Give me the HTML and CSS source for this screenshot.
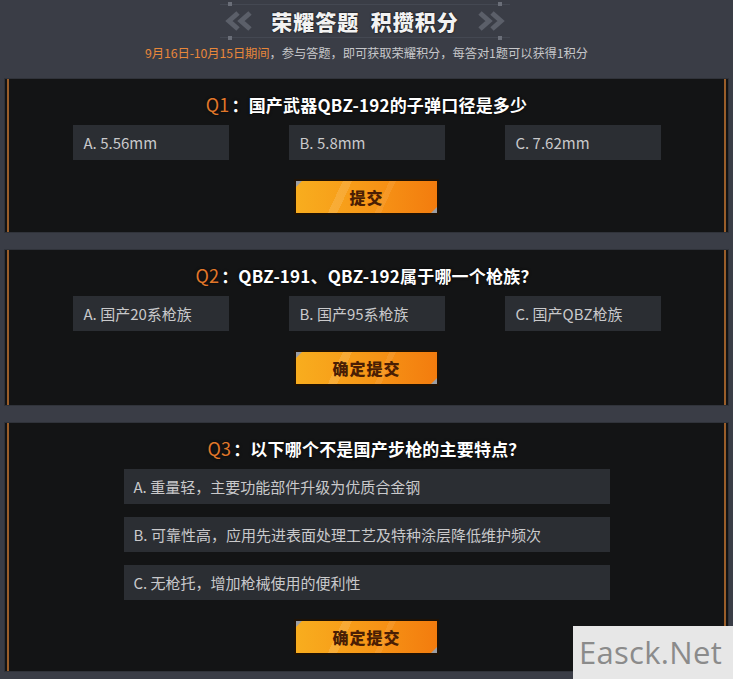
FILE: index.html
```html
<!DOCTYPE html>
<html lang="zh">
<head>
<meta charset="utf-8">
<link rel="stylesheet" href="styles.css">
</head>
<body>
<div class="page">
  <header class="head">
    <div class="banner">
      <svg class="chev" width="36" height="20" viewBox="0 0 36 20"><path d="M14 2 L5 10 L14 18 M26 2 L17 10 L26 18" fill="none" stroke="#5b5f69" stroke-width="5"/></svg>
      <h1 class="title">荣耀答题&nbsp;&nbsp;积攒积分</h1>
      <svg class="chev" width="36" height="20" viewBox="0 0 36 20"><path d="M10 2 L19 10 L10 18 M22 2 L31 10 L22 18" fill="none" stroke="#5b5f69" stroke-width="5"/></svg>
      <span class="dot dot-tl"></span><span class="dot dot-tr"></span><span class="dot dot-bl"></span><span class="dot dot-br"></span>
    </div>
    <p class="sub"><span class="hl">9月16日-10月15日期间</span>，参与答题，即可获取荣耀积分，每答对1题可以获得1积分</p>
  </header>

  <section class="panel">
    <h2 class="q"><span class="qn">Q1</span>：国产武器QBZ-192的子弹口径是多少</h2>
    <div class="opts row">
      <div class="opt">A. 5.56mm</div>
      <div class="opt">B. 5.8mm</div>
      <div class="opt">C. 7.62mm</div>
    </div>
    <button class="btn">提交</button>
  </section>

  <section class="panel">
    <h2 class="q"><span class="qn">Q2</span>：QBZ-191、QBZ-192属于哪一个枪族？</h2>
    <div class="opts row">
      <div class="opt">A. 国产20系枪族</div>
      <div class="opt">B. 国产95系枪族</div>
      <div class="opt">C. 国产QBZ枪族</div>
    </div>
    <button class="btn">确定提交</button>
  </section>

  <section class="panel">
    <h2 class="q"><span class="qn">Q3</span>：以下哪个不是国产步枪的主要特点？</h2>
    <div class="opts col">
      <div class="opt wide">A. 重量轻，主要功能部件升级为优质合金钢</div>
      <div class="opt wide">B. 可靠性高，应用先进表面处理工艺及特种涂层降低维护频次</div>
      <div class="opt wide">C. 无枪托，增加枪械使用的便利性</div>
    </div>
    <button class="btn">确定提交</button>
  </section>
</div>
<div class="wm">Easck.Net</div>
</body>
</html>
```

FILE: styles.css
```css
* { box-sizing: border-box; }
html, body { margin: 0; padding: 0; }
body {
  background: #3a3d46;
  font-family: "Noto Sans CJK SC", "Noto Sans", sans-serif;
  width: 733px;
  height: 679px;
  overflow: hidden;
  position: relative;
}
.page { padding-top: 4px; }
.head { display: flex; flex-direction: column; align-items: center; }
.banner {
  position: relative;
  width: 290px;
  height: 34px;
  display: flex;
  align-items: center;
  justify-content: space-between;
  padding: 0 4px;
  border-top: 1px solid #444852;
  border-bottom: 1px solid #444852;
  margin-left: -3px;
}
.title {
  margin: 0;
  font-size: 21px;
  font-weight: 900;
  color: #f2f2f2;
  letter-spacing: 1px;
  line-height: 30px;
  text-shadow: 0 0 2px #000;
}
.dot { position: absolute; width: 4px; height: 4px; background: #6a6e78; }
.dot-tl { left: 8px; top: -3px; }
.dot-tr { right: 8px; top: -3px; }
.dot-bl { left: 8px; bottom: -3px; }
.dot-br { right: 8px; bottom: -3px; }
.sub {
  margin: 5px 0 0;
  font-size: 12.3px;
  line-height: 20px;
  color: #c6c7ca;
  letter-spacing: -0.1px;
}
.hl { color: #e8873a; }

.panel {
  margin: 16px 5px 0;
  background: #131415;
  box-shadow: inset 2px 0 0 #131415, inset 4px 0 0 #9a5e2a, inset -2px 0 0 #131415, inset -4px 0 0 #9a5e2a, 0 0 0 1px #30333a;
  padding: 16px 0 17px;
  display: flex;
  flex-direction: column;
  align-items: center;
}
.panel + .panel { margin-top: 18px; }
.panel:nth-of-type(2) { padding-bottom: 19px; }
.panel:last-child { padding-bottom: 16px; }

.q {
  margin: 0;
  height: 20px;
  font-size: 17px;
  line-height: 20px;
  font-weight: 700;
  color: #ffffff;
  letter-spacing: 0.2px;
  text-shadow: 0 0 3px rgba(0,0,0,0.8);
}
.qn { color: #e0772a; font-weight: 400; font-size: 18px; line-height: 1; margin-right: 2px; }

.opts { margin-top: 10px; display: flex; }
.row { gap: 60px; }
.col { flex-direction: column; gap: 13px; }
.opt {
  width: 156px;
  height: 35px;
  background: #2b2e33;
  color: #c9c9cb;
  font-size: 15px;
  line-height: 35px;
  padding-left: 11px;
  white-space: nowrap;
}
.wide { width: 486px; padding-left: 10px; }

.btn {
  margin-top: 19px;
  width: 145px;
  height: 36px;
  border: 2px solid #1e1206;
  background:
    linear-gradient(115deg, transparent 0 30%, rgba(255,255,255,0.12) 30% 36%, transparent 36% 60%, rgba(255,255,255,0.08) 60% 64%, transparent 64%),
    linear-gradient(90deg, #f8ad1e 0%, #f79a18 45%, #f37c0e 100%);
  color: #4a1e04;
  font-family: "Noto Sans CJK SC", sans-serif;
  font-size: 16px;
  font-weight: 900;
  letter-spacing: 1px;
  padding: 0;
  position: relative;
  cursor: pointer;
}
.btn::before, .btn::after {
  content: "";
  position: absolute;
  width: 0; height: 0;
  border-style: solid;
}
.btn::before { left: 0; top: 0; border-width: 6px 6px 0 0; border-color: #9a9ea6 transparent transparent transparent; }
.btn::after { right: 0; bottom: 0; border-width: 0 0 6px 6px; border-color: transparent transparent #9a9ea6 transparent; }

.wm {
  position: absolute;
  left: 573px;
  top: 626px;
  width: 160px;
  height: 53px;
  background: #e7e7e7;
  color: #8b8b8b;
  font-family: "Open Sans", "Noto Sans", sans-serif;
  font-size: 31px;
  line-height: 53px;
  padding-left: 6px;
  letter-spacing: 0.3px;
}
```
